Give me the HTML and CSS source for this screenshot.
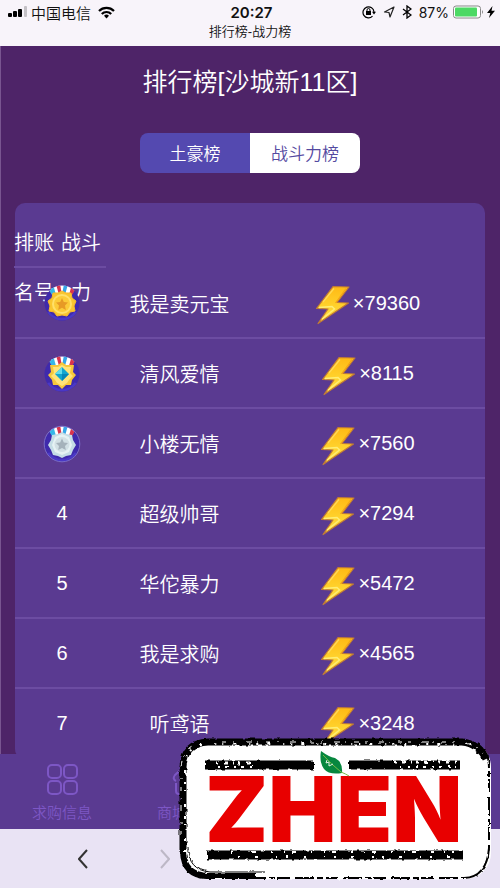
FILE: index.html
```html
<!DOCTYPE html>
<html lang="zh-CN">
<head>
  <meta charset="UTF-8" />
  <meta name="viewport" content="width=device-width, initial-scale=1.0" />
  <title>排行榜-战力榜</title>
  <link rel="stylesheet" href="styles.css">
</head>
<body>
  <!-- shared icons -->
  <svg class="defs" width="0" height="0" aria-hidden="true">
    <defs>
      <linearGradient id="gold" x1="0" y1="0" x2="0" y2="1">
        <stop offset="0" stop-color="#ffb914" />
        <stop offset="0.5" stop-color="#ffd02a" />
        <stop offset="1" stop-color="#ffe04a" />
      </linearGradient>
      <symbol id="bolt" viewBox="0 0 36 40">
        <path d="M18 1.500 34 2 22 17.500 33.500 18 3 38.500 13 24 1.500 23.500Z" fill="url(#gold)" stroke="#c07a35" stroke-width="1.200" stroke-linejoin="round" />
        <path d="M4 22.500 17 21.500 19.500 24 7 34" fill="none" stroke="#ffee75" stroke-width="1.500" />
        <path d="M19 3.500 8 17" fill="none" stroke="#ffd95a" stroke-width="1.200" />
        <path d="M31 3.500 20.500 18" fill="none" stroke="#f5a514" stroke-width="1.200" />
      </symbol>
      <clipPath id="disc"><circle cx="19" cy="19" r="17.500" /></clipPath>
      <symbol id="ribbon" viewBox="0 0 38 38">
        <g clip-path="url(#disc)">
          <path d="M0 0H38V38H0Z" fill="#3f2aac" />
          <path d="M5 28a17 17 0 0 0 28 0" fill="none" stroke="#4a38c6" stroke-width="3" />
          <path d="M6 0H32V6L28 11H10L6 6Z" fill="#fff" />
          <path d="M6 0H10L13 11H9L6 6Z" fill="#35b6e8" />
          <path d="M13 0H17L19 11H16Z" fill="#d8344e" />
          <path d="M21 0H25L22 11H19Z" fill="#35a6e8" />
          <path d="M29 0H32V6L29 11H26Z" fill="#d8344e" />
        </g>
      </symbol>
    </defs>
  </svg>

  <header class="top">
    <div class="status">
      <div class="status-side">
        <svg width="20" height="12" viewBox="0 0 20 12">
          <rect x="0" y="7" width="4" height="4" rx="1" />
          <rect x="5" y="5" width="4" height="6" rx="1" />
          <rect x="10" y="3" width="4" height="8" rx="1" />
          <rect x="16" y="0" width="3" height="11" rx="1" fill="#c4c1c6" />
        </svg>
        <span class="carrier">中国电信</span>
        <svg width="17" height="13" viewBox="0 0 17 13" fill="none" stroke="#000" stroke-width="2.200">
          <path d="M1 5a10.500 10.500 0 0 1 15 0M3.800 8a6.500 6.500 0 0 1 9.400 0" />
          <path d="M8.500 12.500 6 9.800a3.500 3.500 0 0 1 5 0Z" fill="#000" stroke="none" />
        </svg>
      </div>
      <span class="clock">20:27</span>
      <div class="status-side status-right">
        <svg width="14" height="14" viewBox="0 0 14 14" fill="none" stroke="#000">
          <path d="M10.500 11.200A5.500 5.500 0 1 1 12 7" stroke-width="1.200" />
          <path d="M10 6.800h4L12 9.500Z" fill="#000" stroke="none" />
          <rect x="4" y="6" width="5" height="4" fill="#000" stroke="none" />
          <path d="M5 6V5a1.500 1.500 0 0 1 3 0v1" />
        </svg>
        <svg width="12" height="14" viewBox="0 0 12 14" fill="none" stroke="#222" stroke-width="1.200" stroke-linejoin="round">
          <path d="M11 2 1.500 7 6 7.500 7 12Z" />
        </svg>
        <svg width="10" height="14" viewBox="0 0 10 14" fill="none" stroke="#000" stroke-width="1.300">
          <path d="M1 4 9 10 5 13V1L9 4 1 10" />
        </svg>
        <span class="percent">87%</span>
        <svg width="31" height="14" viewBox="0 0 31 14">
          <rect x="0.500" y="1" width="27" height="12" rx="2.500" fill="#fff" stroke="#888" />
          <rect x="2" y="2.500" width="22" height="9" rx="1" fill="#4cd964" />
          <path d="M29 5q2 2 0 4Z" fill="#888" />
        </svg>
        <svg width="8" height="12" viewBox="0 0 8 12"><path d="M5.500 0 0 7h3.300L2 12 8 4.800H4.500Z" /></svg>
      </div>
    </div>
    <div class="page-name">排行榜-战力榜</div>
  </header>

  <main class="content">
    <h1>排行榜[沙城新11区]</h1>
    <div class="switch">
      <button class="active">土豪榜</button>
      <button>战斗力榜</button>
    </div>

    <section class="card">
      <table class="rank-head">
        <tr><th>排</th><th>账</th><th class="power">战斗</th></tr>
        <tr><th>名</th><th>号</th><th class="power">力</th></tr>
      </table>
      <table class="rank">
        <tr>
          <td class="place">
            <svg class="medal" viewBox="0 0 38 38">
              <use href="#ribbon" />
              <path d="M19 7 23 9 28 9 29 14 33 17 31 22 32 27 27 28 24 32 19 31 14 32 11 28 6 27 7 22 5 17 9 14 10 9 15 9Z" fill="#f9c62f" stroke="#f5b82c" stroke-linejoin="round" />
              <circle cx="19" cy="20" r="10" fill="#ffe06a" />
              <circle cx="19" cy="20" r="8" fill="#fccb38" />
              <path d="M19 14 20.800 18 25 18.500 22 21.500 22.800 26 19 23.800 15.200 26 16 21.500 13 18.500 17.200 18Z" fill="#e79a25" />
            </svg>
          </td>
          <td class="name">我是卖元宝</td>
          <td><div class="score"><svg><use href="#bolt" /></svg>×79360</div></td>
        </tr>
        <tr>
          <td class="place">
            <svg class="medal" viewBox="0 0 38 38">
              <use href="#ribbon" />
              <path d="M19 7 23 10 31 10 30 17 33 20 29 25 28 30 23 30 19 34 15 30 10 30 9 25 5 20 8 17 7 10 15 10Z" fill="#f6c83b" />
              <path d="M19 10 23 12 28 12 27 18 30 21 26 25 24 28 19 31 14 28 12 25 8 21 11 18 10 12 15 12Z" fill="#ffe37a" />
              <path d="M19 12 26 19 19 26 12 19Z" fill="#12a5cf" />
              <path d="M19 12v7h-7Z" fill="#63dceb" /><path d="M19 19h7l-7 7Z" fill="#0786b8" />
            </svg>
          </td>
          <td class="name">清风爱情</td>
          <td><div class="score"><svg><use href="#bolt" /></svg>×8115</div></td>
        </tr>
        <tr>
          <td class="place">
            <svg class="medal" viewBox="0 0 38 38">
              <use href="#ribbon" />
              <circle cx="19" cy="19" r="17.800" fill="none" stroke="#8279d2" stroke-width="0.800" />
              <path d="M19 7 23 9 29 10 30 15 33 20 30 25 28 30 23 31 19 33 15 31 10 30 8 25 5 20 8 15 9 10 15 9Z" fill="#c5dde6" />
              <path d="M19 9 26 12 29 20 26 27 19 30 12 27 9 20 12 12Z" fill="#e6f2f4" />
              <circle cx="19" cy="19.500" r="7.500" fill="#d2e0e5" />
              <path d="M19 13.500 20.800 17.500 25 18 22 21 22.800 25 19 23 15.200 25 16 21 13 18 17.200 17.500Z" fill="#a5b2bb" />
            </svg>
          </td>
          <td class="name">小楼无情</td>
          <td><div class="score"><svg><use href="#bolt" /></svg>×7560</div></td>
        </tr>
        <tr>
          <td class="place">4</td>
          <td class="name">超级帅哥</td>
          <td><div class="score"><svg><use href="#bolt" /></svg>×7294</div></td>
        </tr>
        <tr>
          <td class="place">5</td>
          <td class="name">华佗暴力</td>
          <td><div class="score"><svg><use href="#bolt" /></svg>×5472</div></td>
        </tr>
        <tr>
          <td class="place">6</td>
          <td class="name">我是求购</td>
          <td><div class="score"><svg><use href="#bolt" /></svg>×4565</div></td>
        </tr>
        <tr>
          <td class="place">7</td>
          <td class="name">听鸢语</td>
          <td><div class="score"><svg><use href="#bolt" /></svg>×3248</div></td>
        </tr>
      </table>
    </section>
  </main>

  <nav class="tabbar">
    <a href="#">
      <svg width="32" height="32" viewBox="0 0 32 32">
        <rect x="1" y="1" width="13" height="13" rx="4" />
        <rect x="17" y="1" width="13" height="13" rx="4" />
        <rect x="1" y="17" width="13" height="13" rx="4" />
        <rect x="17" y="17" width="13" height="13" rx="4" />
      </svg>
      <span>求购信息</span>
    </a>
    <a href="#">
      <svg width="32" height="32" viewBox="0 0 32 32">
        <path d="M4 17q-4-2-1-6L13 2q3-2 6 0l10 9q3 4-1 6M4 19v8q0 3 3 3h18q3 0 3-3v-8" />
      </svg>
      <span>商城</span>
    </a>
  </nav>

  <footer class="browser-bar">
    <button aria-label="后退"><svg width="10" height="20" viewBox="0 0 10 20"><path d="M9 1 1 10 9 19" /></svg></button>
    <button aria-label="前进" disabled><svg width="10" height="20" viewBox="0 0 10 20"><path d="M1 1 9 10 1 19" /></svg></button>
  </footer>

  <!-- rubber stamp -->
  <svg class="stamp" width="320" height="146" viewBox="0 0 320 146">
    <defs>
      <filter id="rough" x="-5%" y="-20%" width="110%" height="140%">
        <feTurbulence type="fractalNoise" baseFrequency="0.2" numOctaves="2" seed="4" />
        <feDisplacementMap in="SourceGraphic" scale="3" xChannelSelector="R" yChannelSelector="G" />
      </filter>
    </defs>
    <rect x="5" y="4" width="310" height="138" rx="26" fill="#fff" />
    <g filter="url(#rough)" fill="none">
      <path d="M31 4H288Q313 6 313 31V111Q311 140 288 141H31Q6 139 6 115V31Q7 6 31 4Z" stroke="#000" stroke-width="2" />
      <path d="M7 115V30Q8 6 32 5H286Q303 7 310 22" stroke="#000" stroke-width="7" />
      <path d="M7 105V115Q8 138 31 139H80" stroke="#000" stroke-width="6" />
      <path d="M5 98V32Q6 10 22 7M46 5H284Q300 7 307 17" stroke="#fff" stroke-width="1" stroke-dasharray="4 7 2 11 6 5 1 8" />
      <path d="M9 115V30Q9 8 32 7H280" stroke="#fff" stroke-width="2" stroke-dasharray="2 9 3 13 1 6" />
      <path d="M313 31V111M90 141H288" stroke="#fff" stroke-width="3" stroke-dasharray="3 6 2 13 5 19" />
      <path d="M12 110q0 23 22 25h55" stroke="#000" stroke-width="1" />
      <path d="M29 28H138M173 28H284" stroke="#000" stroke-width="9" />
      <path d="M31 118H287" stroke="#000" stroke-width="9" />
      <path d="M40 26H78M218 25H282" stroke="#fff" stroke-width="3" stroke-dasharray="2 6 4 5 1 4" />
      <path d="M42 30H80M224 30H280" stroke="#fff" stroke-width="2" stroke-dasharray="2 5 3 6" />
      <path d="M55 115H278" stroke="#fff" stroke-width="2" stroke-dasharray="2 11 1 7 4 15" />
      <path d="M62 120H280" stroke="#fff" stroke-width="2" stroke-dasharray="2 15 3 18 1 9" />
    </g>
    <text class="stamp-text" x="29" y="105">ZHEN</text>
    <path d="M145 14q8 6 14 7 8 4 7 15-13 2-18-4-5-7-3-18Z" fill="#07873f" />
    <path d="M147 18q8 9 18 17 5 2 8 4" fill="none" stroke="#77bd45" stroke-width="1" />
    <path d="m151 23-1 3 3-1v4l4-2" fill="none" stroke="#e4f2e4" stroke-width="1" />
  </svg>
</body>
</html>
```

FILE: styles.css
```css
* {
  box-sizing: border-box;
}
body {
  margin: 0;
  height: 100vh;
  display: flex;
  flex-direction: column;
  position: relative;
  overflow: hidden;
  font-family: "Liberation Sans", "Noto Sans CJK SC", sans-serif;
  font-weight: 350;
  background-color: #4e2468;
}
button {
  font: inherit;
  border: none;
  padding: 0;
  background: none;
}
.defs {
  position: absolute;
}

/* status bar */
.top {
  height: 46px;
  flex: none;
  background-color: #f8f4fa;
  color: #111;
}
.status {
  display: flex;
  align-items: center;
  height: 24px;
  padding: 0 5px 0 8px;
}
.status-side {
  flex: 1;
  display: flex;
  align-items: center;
  gap: 3px;
  font-size: 15px;
}
.carrier {
  margin-right: 4px;
}
.status-right {
  justify-content: flex-end;
  gap: 7px;
}
.percent {
  font-family: Inter, sans-serif;
  font-weight: 400;
  font-size: 14px;
  margin-right: -3px;
}
.status-right svg:last-child {
  margin-left: -4px;
}
.clock {
  font-family: Inter, sans-serif;
  font-weight: 600;
  font-size: 15px;
}
.page-name {
  font-size: 13px;
  line-height: 16px;
  text-align: center;
}

/* ranking */
.content {
  flex: 1;
  min-height: 0;
  overflow: hidden;
  padding: 0 15px 0 14px;
  border-left: 1px solid #795590;
  color: #fff;
}
h1 {
  margin: 0;
  padding-top: 16px;
  font-size: 25px;
  line-height: 40px;
  font-weight: 350;
  text-align: center;
}
.switch {
  display: flex;
  width: 220px;
  margin: 31px auto 30px;
  border-radius: 8px;
  overflow: hidden;
}
.switch button {
  flex: 1;
  height: 40px;
  padding-bottom: 2px;
  font-size: 17px;
  color: #54499f;
  background-color: #fff;
}
.switch .active {
  color: #fff;
  background-color: #5449b0;
}
.card {
  padding-top: 15px;
  border-radius: 10px;
  background-color: #5a3a91;
  font-size: 20px;
}
table {
  border-collapse: collapse;
}
.rank-head {
  margin: 0 0 -48px -1px;
}
.rank-head th {
  height: 49px;
  padding: 0 0 2px;
  font-weight: 350;
  border-bottom: 2px solid #6c4ca2;
}
.rank-head tr:last-child th {
  border: none;
}
.rank-head .power {
  padding: 0 5px 2px 7px;
}
.rank {
  width: 100%;
  table-layout: fixed;
  text-align: center;
}
.rank td {
  height: 70px;
  padding: 1px 0 0;
  border-bottom: 2px solid #6c4ca2;
}
.place {
  width: 20%;
}
.name {
  width: 30%;
}
.medal {
  display: block;
  width: 38px;
  height: 38px;
  margin: 0 auto;
}
.score {
  display: flex;
  justify-content: center;
  align-items: center;
  gap: 2px;
}
.score svg {
  width: 36px;
  height: 44px;
  padding-top: 4px;
}

/* bottom bars */
.tabbar {
  display: flex;
  flex: none;
  height: 75px;
  background-color: #5a3a91;
}
.tabbar a {
  width: 25%;
  padding: 10px 32px 0;
  color: #7d57c5;
  font-size: 15px;
  line-height: 22px;
  text-decoration: none;
  white-space: nowrap;
}
.tabbar svg {
  display: block;
  margin: 0 auto 6px;
  fill: none;
  stroke: #7d57c5;
  stroke-width: 2;
}
.browser-bar {
  display: flex;
  flex: none;
  gap: 42px;
  height: 59px;
  padding-left: 63px;
  background-color: #e9e3f4;
}
.browser-bar button {
  width: 40px;
}
.browser-bar svg {
  display: block;
  margin: 0 auto;
  fill: none;
  stroke: #333;
  stroke-width: 2;
}
.browser-bar button:disabled svg {
  stroke: #bdb8c6;
}

.stamp {
  position: absolute;
  right: 4px;
  bottom: 5px;
}
.stamp-text {
  font-family: Inter, sans-serif;
  font-size: 91px;
  font-weight: 900;
  fill: #e80000;
}
```
